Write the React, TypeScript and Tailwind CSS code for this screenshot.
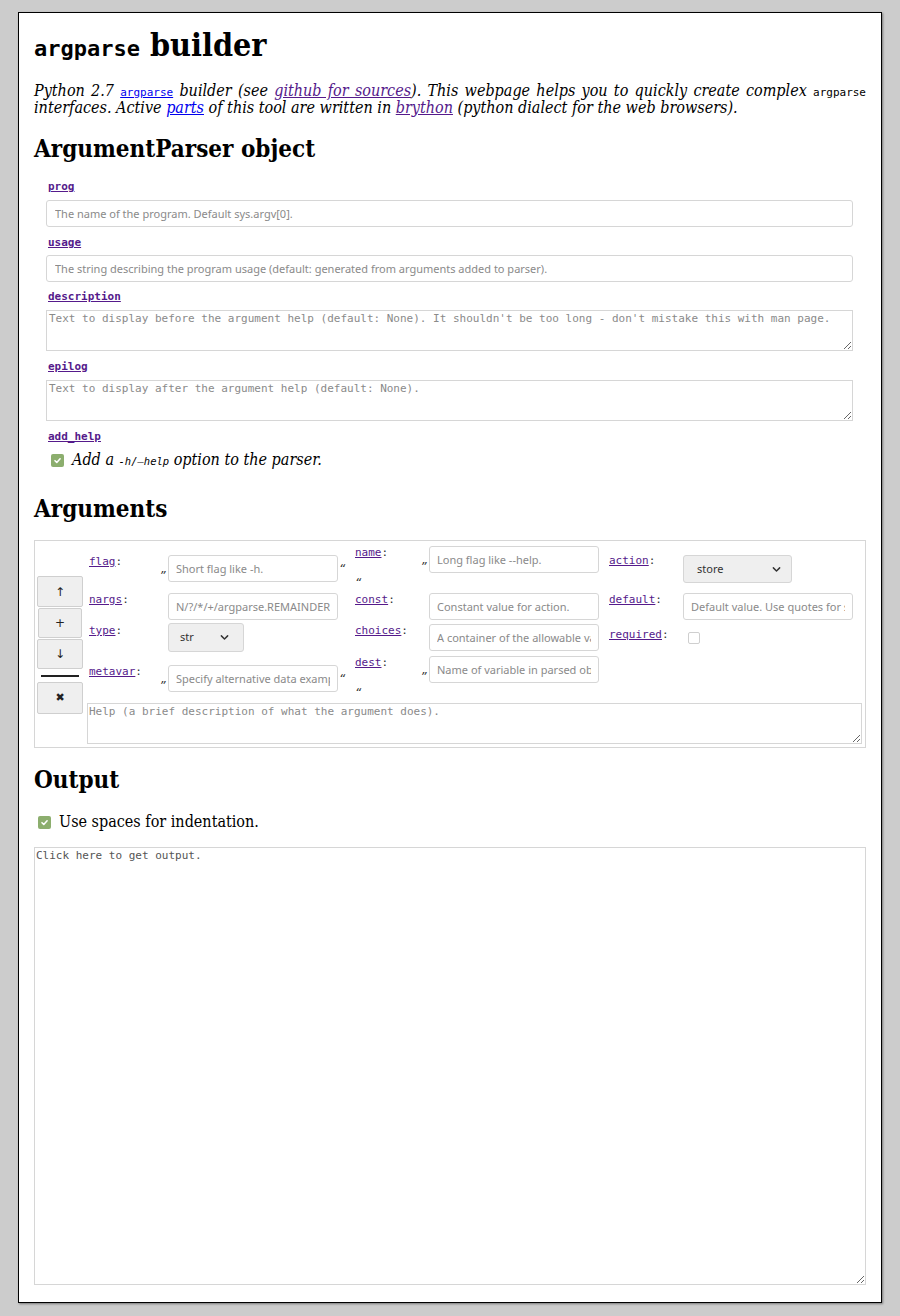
import React from "react";

function GreenCheck() {
  return (
    <span className="inline-flex w-[13px] h-[13px] rounded-[2px] bg-[#8cae6e] items-center justify-center shrink-0">
      <svg viewBox="0 0 10 10" className="w-[9px] h-[9px]">
        <path d="M2.2 5.2 L4.2 7.1 L7.9 3" stroke="white" strokeWidth="1.7" fill="none" strokeLinecap="round" strokeLinejoin="round" />
      </svg>
    </span>
  );
}

function Chevron() {
  return (
    <svg viewBox="0 0 10 10" className="w-[9px] h-[9px]">
      <path d="M1.5 3.2 L5 6.7 L8.5 3.2" stroke="#333" strokeWidth="1.6" fill="none" strokeLinecap="round" strokeLinejoin="round" />
    </svg>
  );
}

function FieldLabel({ name }: { name: string }) {
  return (
    <div className="ml-[2px] leading-[14px] text-[11px] font-['DejaVu_Sans_Mono',monospace] font-bold">
      <a className="underline text-[#551a8b]">{name}</a>
    </div>
  );
}

function ArgLabel({ name }: { name: string }) {
  return (
    <div className="pl-[2px] leading-[14px] text-[11px] font-['DejaVu_Sans_Mono',monospace] text-[#333]">
      <a className="underline text-[#551a8b]">{name}</a>:
    </div>
  );
}

function Quote({ ch }: { ch: string }) {
  return (
    <span className="w-[8px] shrink-0 text-center leading-[14px] text-[12px] italic text-[#333] font-['DejaVu_Sans',sans-serif]">
      {ch}
    </span>
  );
}

const inputCls =
  "w-[170px] h-[27px] shrink-0 border border-[#d6d6d6] rounded-[3px] px-[7px] text-[11px] font-['Noto_Sans',sans-serif] text-[#333] placeholder:text-[#8a8a8a] outline-none bg-white";

const serifCls = "font-['DejaVu_Serif_Condensed','DejaVu_Serif',serif] [font-stretch:condensed]";

export default function App() {
  return (
    <div className="min-h-screen bg-[#cccccc] pt-[12px] px-[18px] pb-[14px]">
      <div className="bg-white border border-black shadow-[1px_1px_2px_#777] px-[15px] pb-[17px] pt-[16px] text-black">
        <h1 className={"leading-[32px] text-[32px] font-bold " + serifCls}>
          <span className="text-[22px] font-['DejaVu_Sans_Mono',monospace] [font-stretch:normal]">argparse</span> builder
        </h1>

        <p className={"mt-[17px] text-[16px] leading-[17px] italic text-justify " + serifCls}>
          Python 2.7{" "}
          <a className="underline text-[#0000ee] not-italic leading-none text-[11px] font-['DejaVu_Sans_Mono',monospace] [font-stretch:normal]">argparse</a>{" "}
          builder (see <a className="underline text-[#551a8b]">github for sources</a>). This webpage helps you to quickly
          create complex{" "}
          <code className="not-italic leading-none text-[11px] font-['DejaVu_Sans_Mono',monospace] [font-stretch:normal]">argparse</code> interfaces. Active{" "}
          <a className="underline text-[#0000ee]">parts</a> of this tool are written in{" "}
          <a className="underline text-[#551a8b]">brython</a> (python dialect for the web browsers).
        </p>

        <h2 className={"mt-[19px] leading-[28px] text-[24px] font-bold " + serifCls}>ArgumentParser object</h2>

        <div className="mt-[17px] ml-[12px] mr-[13px] flex flex-col">
          <FieldLabel name="prog" />
          <input className="mt-[6px] h-[27px] w-full border border-[#d6d6d6] rounded-[3px] px-[8px] text-[11px] font-['Noto_Sans',sans-serif] placeholder:text-[#8a8a8a] outline-none" placeholder="The name of the program. Default sys.argv[0]." />
          <div className="mt-[9px]">
            <FieldLabel name="usage" />
          </div>
          <input className="mt-[5px] h-[27px] w-full border border-[#d6d6d6] rounded-[3px] px-[8px] text-[11px] font-['Noto_Sans',sans-serif] placeholder:text-[#8a8a8a] outline-none" placeholder="The string describing the program usage (default: generated from arguments added to parser)." />
          <div className="mt-[8px]">
            <FieldLabel name="description" />
          </div>
          <textarea className="mt-[6px] h-[41px] w-full border border-[#d6d6d6] px-[2px] py-[1px] text-[11px] leading-[14px] font-['DejaVu_Sans_Mono',monospace] placeholder:text-[#8a8a8a] outline-none" placeholder="Text to display before the argument help (default: None). It shouldn't be too long - don't mistake this with man page." />
          <div className="mt-[9px]">
            <FieldLabel name="epilog" />
          </div>
          <textarea className="mt-[6px] h-[41px] w-full border border-[#d6d6d6] px-[2px] py-[1px] text-[11px] leading-[14px] font-['DejaVu_Sans_Mono',monospace] placeholder:text-[#8a8a8a] outline-none" placeholder="Text to display after the argument help (default: None)." />
          <div className="mt-[9px]">
            <FieldLabel name="add_help" />
          </div>
          <div className="mt-[6px] h-[20px] flex items-center pl-[5px] gap-[8px]">
            <GreenCheck />
            <span className={"text-[16px] italic " + serifCls}>
              Add a <code className="text-[10.5px] font-['DejaVu_Sans_Mono',monospace] [font-stretch:normal] italic">-h/–help</code> option to the parser.
            </span>
          </div>
        </div>

        <h2 className={"mt-[25px] leading-[28px] text-[24px] font-bold " + serifCls}>Arguments</h2>

        <div className="mt-[17px] border border-[#d6d6d6] flex pl-[2px] pr-[3px] pt-[5px] pb-[3px]">
          <div className="w-[46px] shrink-0 flex flex-col justify-center items-center text-[12px] font-['DejaVu_Sans',sans-serif] text-[#222]">
            <div className="w-[46px] h-[31px] bg-[#efefef] border border-[#cfcfcf] rounded-[2px] flex items-center justify-center">↑</div>
            <div className="mt-[1px] w-[44px] h-[30px] bg-[#efefef] border border-[#cfcfcf] rounded-[2px] flex items-center justify-center">+</div>
            <div className="mt-[1px] w-[46px] h-[30px] bg-[#efefef] border border-[#cfcfcf] rounded-[2px] flex items-center justify-center">↓</div>
            <div className="mt-[6px] w-[38px] h-[1.5px] bg-[#222]" />
            <div className="mt-[5px] w-[46px] h-[32px] bg-[#efefef] border border-[#cfcfcf] rounded-[2px] flex items-center justify-center text-[11px]">✖</div>
          </div>

          <div className="ml-[4px] flex-1 flex flex-col">
            <div className="grid items-start grid-cols-[73px_193px_68px_186px_76px_1fr] grid-rows-[47px_29px_34px_39px]">
              {/* row 1 */}
              <div className="mt-[9px]"><ArgLabel name="flag" /></div>
              <div className="mt-[9px] flex items-center">
                <Quote ch="„" />
                <input className={inputCls} placeholder="Short flag like -h." />
                <Quote ch="“" />
              </div>
              <div>
                <ArgLabel name="name" />
                <div className="mt-[9px] pl-[2px]"><span className="leading-[14px] text-[12px] italic text-[#333] font-['DejaVu_Sans',sans-serif]">“</span></div>
              </div>
              <div className="flex items-start">
                <div className="h-[27px] flex items-center"><Quote ch="„" /></div>
                <input className={inputCls} placeholder="Long flag like --help." />
              </div>
              <div className="mt-[8px]"><ArgLabel name="action" /></div>
              <div className="mt-[9px]">
                <div className="w-[109px] h-[28px] bg-[#efefef] border border-[#d6d6d6] rounded-[3px] flex items-center justify-between pl-[13px] pr-[10px] text-[11px] font-['Noto_Sans',sans-serif] text-[#333]">
                  <span>store</span>
                  <Chevron />
                </div>
              </div>

              {/* row 2 */}
              <div><ArgLabel name="nargs" /></div>
              <div className="flex items-start">
                <span className="w-[8px] shrink-0" />
                <input className={inputCls} placeholder="N/?/*/+/argparse.REMAINDER" />
              </div>
              <div><ArgLabel name="const" /></div>
              <div className="flex items-start">
                <span className="w-[8px] shrink-0" />
                <input className={inputCls} placeholder="Constant value for action." />
              </div>
              <div><ArgLabel name="default" /></div>
              <div>
                <input className={inputCls} placeholder="Default value. Use quotes for strings." />
              </div>

              {/* row 3 */}
              <div className="mt-[2px]"><ArgLabel name="type" /></div>
              <div className="mt-[1px] flex items-start">
                <span className="w-[8px] shrink-0" />
                <div className="w-[76px] h-[29px] bg-[#efefef] border border-[#d6d6d6] rounded-[3px] flex items-center justify-between pl-[11px] pr-[14px] text-[11px] font-['Noto_Sans',sans-serif] text-[#333]">
                  <span>str</span>
                  <Chevron />
                </div>
              </div>
              <div className="mt-[2px]"><ArgLabel name="choices" /></div>
              <div className="mt-[2px] flex items-start">
                <span className="w-[8px] shrink-0" />
                <input className={inputCls} placeholder="A container of the allowable values." />
              </div>
              <div className="mt-[6px]"><ArgLabel name="required" /></div>
              <div className="mt-[10px] pl-[5px]">
                <span className="block w-[12px] h-[12px] border border-[#cfcfcf] rounded-[2px] bg-white" />
              </div>

              {/* row 4 */}
              <div className="mt-[9px]"><ArgLabel name="metavar" /></div>
              <div className="mt-[9px] flex items-center">
                <Quote ch="„" />
                <input className={inputCls} placeholder="Specify alternative data example in help." />
                <Quote ch="“" />
              </div>
              <div>
                <ArgLabel name="dest" />
                <div className="mt-[9px] pl-[2px]"><span className="leading-[14px] text-[12px] italic text-[#333] font-['DejaVu_Sans',sans-serif]">“</span></div>
              </div>
              <div className="flex items-start">
                <div className="h-[27px] flex items-center"><Quote ch="„" /></div>
                <input className={inputCls} placeholder="Name of variable in parsed object." />
              </div>
              <div />
              <div />
            </div>
            <textarea className="mt-[8px] h-[41px] w-full border border-[#d6d6d6] px-[1px] py-[1px] text-[11px] leading-[14px] font-['DejaVu_Sans_Mono',monospace] placeholder:text-[#8a8a8a] outline-none" placeholder="Help (a brief description of what the argument does)." />
          </div>
        </div>

        <h2 className={"mt-[18px] leading-[28px] text-[24px] font-bold " + serifCls}>Output</h2>

        <div className="mt-[18px] h-[20px] flex items-center pl-[4px] gap-[8px]">
          <GreenCheck />
          <span className={"text-[16px] " + serifCls}>Use spaces for indentation.</span>
        </div>

        <textarea className="mt-[15px] block h-[438px] w-full border border-[#d6d6d6] px-[1px] py-[1px] text-[11px] leading-[14px] font-['DejaVu_Sans_Mono',monospace] placeholder:text-[#555] outline-none" placeholder="Click here to get output." />
      </div>
    </div>
  );
}
